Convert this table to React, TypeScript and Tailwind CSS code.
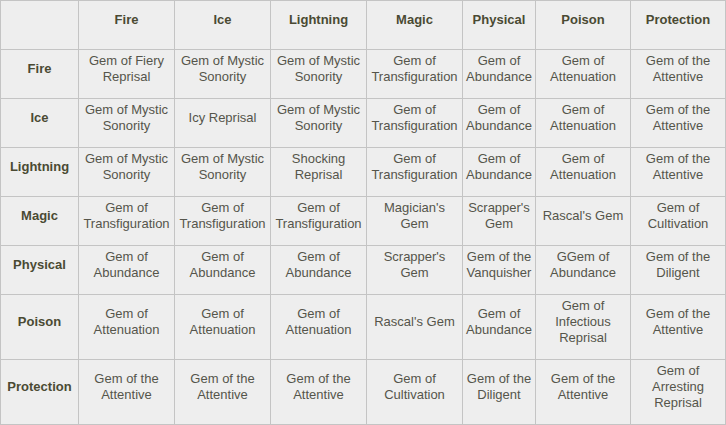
import React from "react";

const cols = ["Fire", "Ice", "Lightning", "Magic", "Physical", "Poison", "Protection"];

const rows: { label: string; cells: string[] }[] = [
  {
    label: "Fire",
    cells: ["Gem of Fiery|Reprisal", "Gem of Mystic|Sonority", "Gem of Mystic|Sonority", "Gem of|Transfiguration", "Gem of|Abundance", "Gem of|Attenuation", "Gem of the|Attentive"],
  },
  {
    label: "Ice",
    cells: ["Gem of Mystic|Sonority", "Icy Reprisal", "Gem of Mystic|Sonority", "Gem of|Transfiguration", "Gem of|Abundance", "Gem of|Attenuation", "Gem of the|Attentive"],
  },
  {
    label: "Lightning",
    cells: ["Gem of Mystic|Sonority", "Gem of Mystic|Sonority", "Shocking|Reprisal", "Gem of|Transfiguration", "Gem of|Abundance", "Gem of|Attenuation", "Gem of the|Attentive"],
  },
  {
    label: "Magic",
    cells: ["Gem of|Transfiguration", "Gem of|Transfiguration", "Gem of|Transfiguration", "Magician's|Gem", "Scrapper's|Gem", "Rascal's Gem", "Gem of|Cultivation"],
  },
  {
    label: "Physical",
    cells: ["Gem of|Abundance", "Gem of|Abundance", "Gem of|Abundance", "Scrapper's|Gem", "Gem of the|Vanquisher", "GGem of|Abundance", "Gem of the|Diligent"],
  },
  {
    label: "Poison",
    cells: ["Gem of|Attenuation", "Gem of|Attenuation", "Gem of|Attenuation", "Rascal's Gem", "Gem of|Abundance", "Gem of|Infectious|Reprisal", "Gem of the|Attentive"],
  },
  {
    label: "Protection",
    cells: ["Gem of the|Attentive", "Gem of the|Attentive", "Gem of the|Attentive", "Gem of|Cultivation", "Gem of the|Diligent", "Gem of the|Attentive", "Gem of|Arresting|Reprisal"],
  },
];

function Cell({ text, bold }: { text: string; bold?: boolean }) {
  const lines = text.split("|");
  return (
    <div
      className={
        "bg-[#eeeeee] flex flex-col items-center justify-center pb-[10px] text-center whitespace-nowrap leading-[16px] " +
        (bold ? "font-bold text-[13px] text-[#4a4a33]" : "text-[13px] text-[#55554b]")
      }
    >
      {lines.map((l, i) => (
        <span key={i}>{l}</span>
      ))}
    </div>
  );
}

export default function App() {
  return (
    <div
      className="w-[726px] h-[425px] bg-[#c4c4c4] p-px"
      style={{ fontFamily: '"Liberation Sans", Arial, sans-serif' }}
    >
      <div className="grid h-full w-full gap-px grid-cols-[77px_95px_95px_95px_95px_72px_94px_94px] grid-rows-[48px_48px_48px_48px_48px_48px_64px_64px]">
        <div className="bg-[#eeeeee]" />
        {cols.map((c) => (
          <Cell key={c} text={c} bold />
        ))}
        {rows.map((r) => (
          <React.Fragment key={r.label}>
            <Cell text={r.label} bold />
            {r.cells.map((t, i) => (
              <Cell key={i} text={t} />
            ))}
          </React.Fragment>
        ))}
      </div>
    </div>
  );
}
